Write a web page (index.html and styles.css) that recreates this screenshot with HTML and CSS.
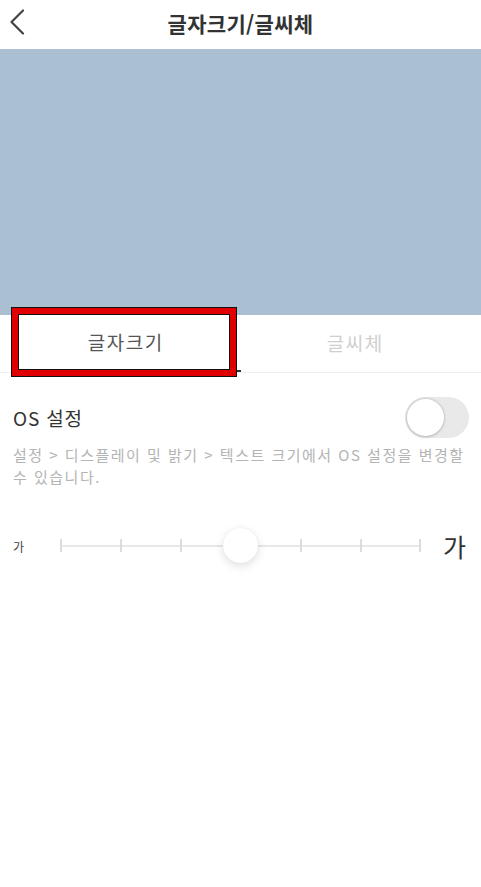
FILE: index.html
```html
<!DOCTYPE html>
<html lang="ko">
<head>
<meta charset="utf-8">
<title>글자크기/글씨체</title>
<link rel="stylesheet" href="styles.css">
</head>
<body>
<div class="app">
  <header class="header">
    <button class="back" aria-label="뒤로">
      <svg width="16" height="26" viewBox="0 0 16 26"><polyline points="14,1.5 2.5,13 14,24.5" fill="none" stroke="#444" stroke-width="2.2" stroke-linecap="round" stroke-linejoin="round"/></svg>
    </button>
    <h1 class="title">글자크기/글씨체</h1>
    <span class="spacer"></span>
  </header>
  <div class="preview"></div>
  <nav class="tabs">
    <div class="tab active">글자크기</div>
    <div class="tab">글씨체</div>
    <div class="highlight"></div>
  </nav>
  <section class="os-row">
    <span class="os-label">OS 설정</span>
    <span class="toggle"><span class="knob"></span></span>
  </section>
  <p class="desc">설정 &gt; 디스플레이 및 밝기 &gt; 텍스트 크기에서 OS 설정을 변경할 수 있습니다.</p>
  <section class="slider-row">
    <span class="small-ga">가</span>
    <div class="track">
      <span class="tick" style="left:0"></span>
      <span class="tick" style="left:60px"></span>
      <span class="tick" style="left:120px"></span>
      <span class="tick" style="left:180px"></span>
      <span class="tick" style="left:240px"></span>
      <span class="tick" style="left:300px"></span>
      <span class="tick" style="left:359px"></span>
      <span class="thumb" style="left:180px"></span>
    </div>
    <span class="big-ga">가</span>
  </section>
</div>
</body>
</html>
```
FILE: styles.css
```css
* { box-sizing: border-box; }
html, body { margin: 0; padding: 0; background: #fff; }
body {
  font-family: "Noto Sans CJK KR", "Noto Sans", sans-serif;
  color: #333;
}
.app { width: 481px; min-height: 887px; background: #fff; }

.header {
  height: 49px;
  display: grid;
  grid-template-columns: 48px 1fr 48px;
  align-items: center;
}
.back {
  border: 0; background: none; padding: 0 0 0 9px;
  height: 49px; display: flex; align-items: center; margin-top: -5px;
}
.title {
  margin: 0;
  text-align: center;
  font-size: 21px;
  font-weight: 700;
  color: #333;
  letter-spacing: 0.3px;
  margin-top: -4px;
}

.preview { height: 266px; background: #aabfd1; }

.tabs {
  position: relative;
  display: flex;
  height: 58px;
  padding: 0 11px;
  border-bottom: 1px solid #efefef;
}
.tab {
  flex: 1;
  display: flex;
  align-items: center;
  justify-content: center;
  font-size: 19px;
  letter-spacing: 1.5px;
  color: #cfcfcf;
  padding-bottom: 2px;
}
.tab.active { color: #555; border-bottom: 2px solid #333; }
.highlight {
  position: absolute;
  left: 12px;
  top: -7px;
  width: 224px;
  height: 68px;
  border: 6px solid #e00000;
  box-shadow: 0 0 0 1px #111, inset 0 0 0 1px #111;
  pointer-events: none;
}

.os-row {
  display: flex;
  align-items: center;
  justify-content: space-between;
  margin-top: 23px;
  height: 42px;
  padding: 0 12px 0 13px;
}
.os-label { font-size: 19px; letter-spacing: 0.8px; color: #333; }
.toggle {
  width: 64px;
  height: 41px;
  border-radius: 21px;
  background: #e9e9e9;
  padding: 2px;
  display: flex;
  align-items: center;
}
.knob {
  width: 37px;
  height: 37px;
  border-radius: 50%;
  background: #fff;
  box-shadow: 0 0 2px 1px rgba(0,0,0,0.12), 0 2px 3px rgba(0,0,0,0.08);
}

.desc {
  margin: 6px 0 0;
  padding: 0 10px 0 13px;
  font-size: 15px;
  line-height: 22px;
  letter-spacing: 1.5px;
  word-break: keep-all;
  color: #b4b4b4;
}

.slider-row {
  display: flex;
  align-items: center;
  height: 36px;
  margin-top: 40px;
  padding-left: 13px;
}
.small-ga { width: 47px; font-size: 12px; color: #444; }
.track {
  position: relative;
  width: 361px;
  height: 2px;
  background: #e8e8e8;
}
.tick {
  position: absolute;
  top: -6px;
  width: 1.5px;
  height: 13px;
  background: #dcdcdc;
}
.thumb {
  position: absolute;
  top: -17px;
  margin-left: -17px;
  width: 35px;
  height: 35px;
  border-radius: 50%;
  background: #fff;
  box-shadow: 0 3px 10px rgba(0,0,0,0.13), 0 0 1px rgba(0,0,0,0.1);
}
.big-ga { margin-left: 22px; font-size: 25px; color: #333; line-height: 1; }
```
